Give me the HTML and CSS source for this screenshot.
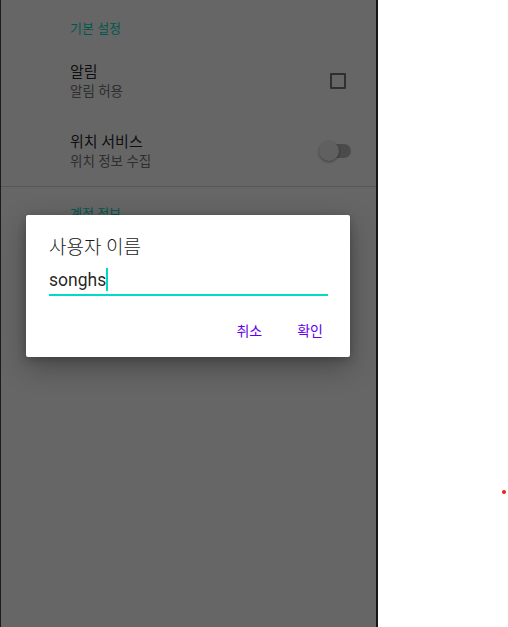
FILE: index.html
```html
<!DOCTYPE html>
<html lang="ko">
<head>
    <meta charset="UTF-8">
    <meta name="viewport" content="width=device-width, initial-scale=1.0">
    <title>설정</title>
    <link rel="stylesheet" href="styles.css">
</head>
<body>
    <div class="phone">
        <div class="settings">
            <div class="category">기본 설정</div>
            <div class="pref">
                <div class="pref-text">
                    <div class="pref-title">알림</div>
                    <div class="pref-summary">알림 허용</div>
                </div>
                <div class="checkbox"></div>
            </div>
            <div class="pref">
                <div class="pref-text">
                    <div class="pref-title">위치 서비스</div>
                    <div class="pref-summary">위치 정보 수집</div>
                </div>
                <div class="switch">
                    <div class="switch-track"></div>
                    <div class="switch-thumb"></div>
                </div>
            </div>
            <div class="divider"></div>
            <div class="category category-second">계정 정보</div>
        </div>

        <!-- dimmed background behind the dialog -->
        <div class="scrim"></div>

        <div class="dialog">
            <div class="dialog-title">사용자 이름</div>
            <div class="dialog-input">
                <span class="input-value">songhs</span><span class="cursor"></span>
            </div>
            <div class="dialog-actions">
                <span class="btn">취소</span>
                <span class="btn">확인</span>
            </div>
        </div>
    </div>

    <div class="side">
        <span class="dot"></span>
    </div>
</body>
</html>
```

FILE: styles.css
```css
body {
    margin: 0;
    padding: 0;
    background-color: #fff;
    font-family: Roboto, "Noto Sans CJK KR", sans-serif;
    display: flex;
    height: 627px;
    overflow: hidden;
}

.phone {
    width: 375px;
    height: 627px;
    border-left: 1px solid #1c1c1c;
    border-right: 2px solid #161616;
    background-color: #fff;
    position: relative;
    overflow: hidden;
}

.settings {
    display: flex;
    flex-direction: column;
}

.category {
    padding: 17px 0 5px 69px;
    font-size: 13px;
    line-height: 24px;
    font-weight: 400;
    color: #03dac5;
}

.category-second {
    padding-top: 15px;
}

.pref {
    display: flex;
    align-items: center;
    height: 70px;
    padding: 0 29px 0 69px;
}

.pref-text {
    flex: 1;
}

.pref-title {
    font-size: 15px;
    line-height: 20px;
    color: rgba(0, 0, 0, 0.87);
}

.pref-summary {
    font-size: 13.5px;
    line-height: 19px;
    color: #757575;
}

.checkbox {
    width: 12px;
    height: 12px;
    border: 2px solid #757575;
    border-radius: 1px;
    margin-right: 1px;
}

.switch {
    width: 32px;
    height: 20px;
    margin-right: -4px;
    position: relative;
}

.switch-track {
    position: absolute;
    left: 2px;
    top: 3px;
    width: 30px;
    height: 14px;
    border-radius: 7px;
    background-color: #bbb;
}

.switch-thumb {
    position: absolute;
    left: 0;
    top: 0;
    width: 20px;
    height: 20px;
    border-radius: 50%;
    background-color: #f1f1f1;
    box-shadow: 0 1px 3px rgba(0, 0, 0, 0.4);
}

.divider {
    height: 1px;
    background-color: #d8d8d8;
}

.scrim {
    position: absolute;
    inset: 0;
    background-color: rgba(0, 0, 0, 0.6);
}

.dialog {
    position: absolute;
    top: 215px;
    left: 25px;
    width: 324px;
    height: 142px;
    background-color: #fff;
    border-radius: 2px;
    box-shadow: 0 10px 28px rgba(0, 0, 0, 0.3), 0 2px 8px rgba(0, 0, 0, 0.2);
    padding: 20px 22px 0 23px;
    box-sizing: border-box;
}

.dialog-title {
    font-size: 19px;
    line-height: 26px;
    font-weight: 300;
    color: #1a1a1a;
}

.dialog-input {
    margin-top: 3px;
    height: 28px;
    border-bottom: 2px solid #03dac5;
    display: flex;
    align-items: flex-end;
    padding-bottom: 2px;
    box-sizing: content-box;
    width: 279px;
}

.input-value {
    font-size: 17.5px;
    line-height: 24px;
    color: rgba(0, 0, 0, 0.87);
}

.cursor {
    width: 2px;
    height: 23px;
    margin-left: 0;
    margin-bottom: 1px;
    background-color: #03dac5;
}

.dialog-actions {
    display: flex;
    justify-content: flex-end;
    gap: 35px;
    margin-top: 25px;
    padding-right: 5px;
}

.btn {
    font-size: 14px;
    line-height: 20px;
    font-weight: 400;
    color: #6200ee;
}

.side {
    flex: 1;
    position: relative;
}

.dot {
    position: absolute;
    left: 124px;
    top: 490px;
    width: 4px;
    height: 4px;
    border-radius: 50%;
    background-color: #e8201c;
}
```
